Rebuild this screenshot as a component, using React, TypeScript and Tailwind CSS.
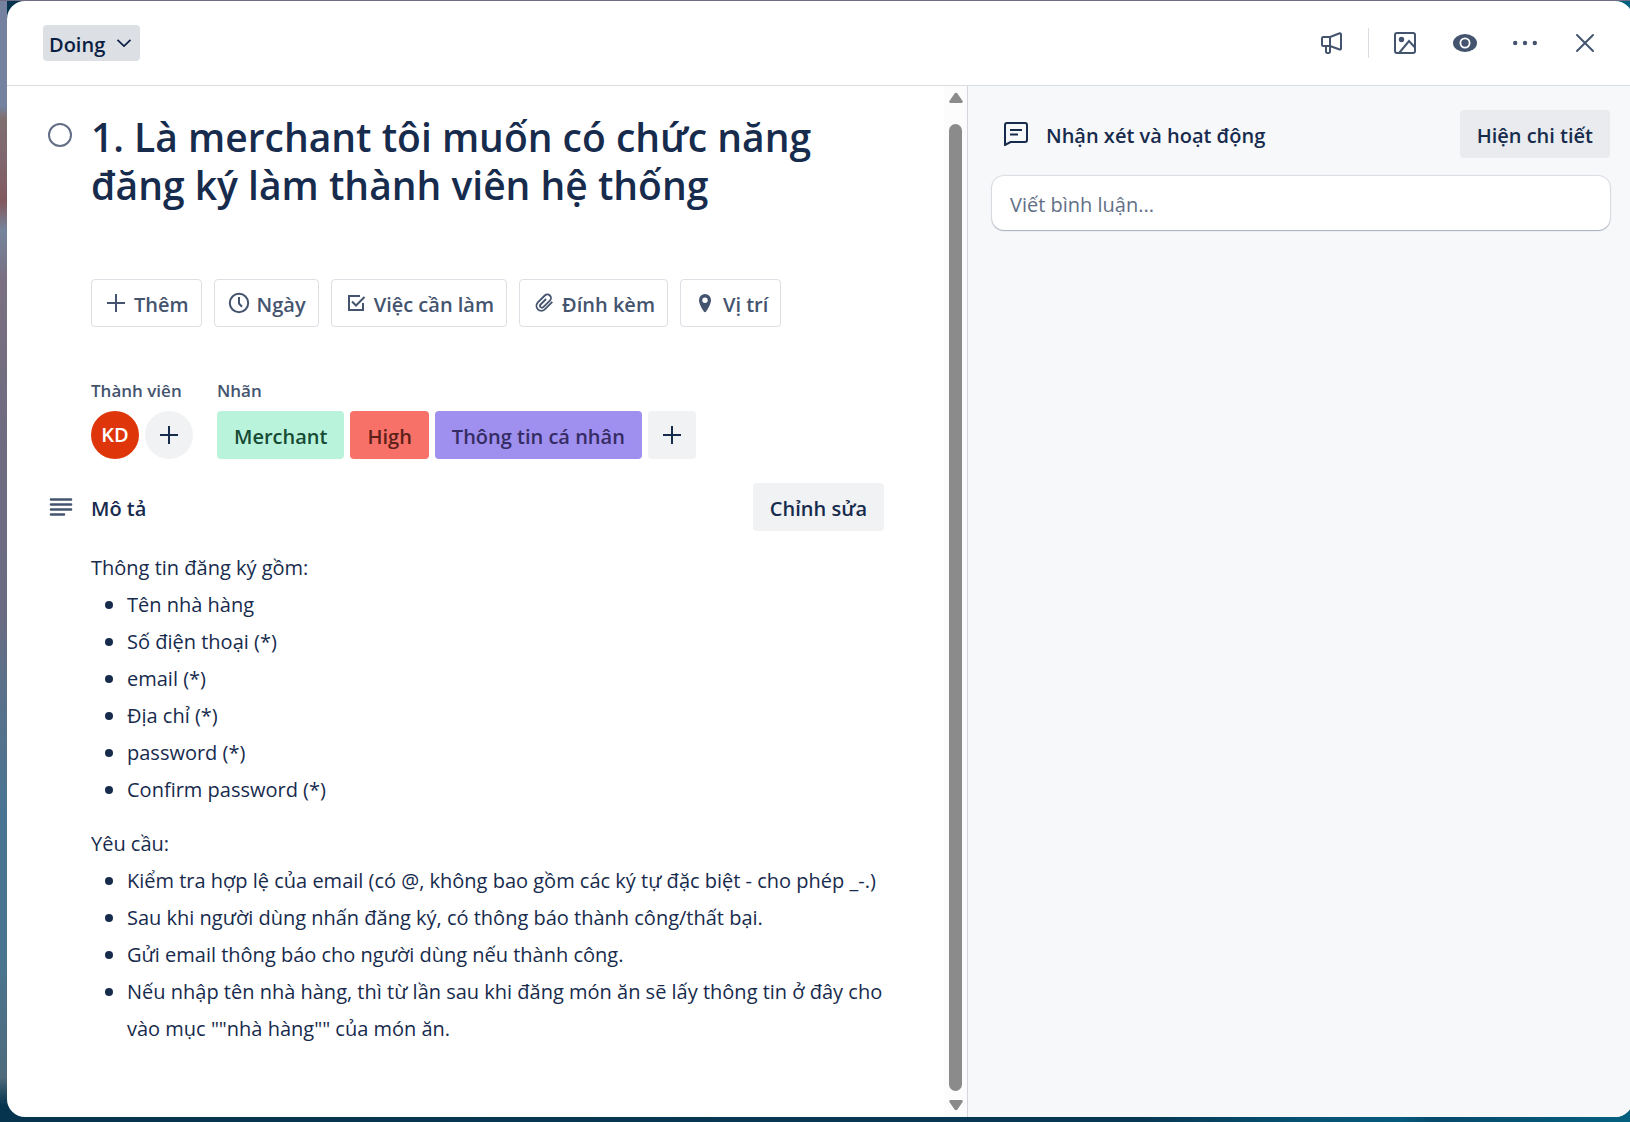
import type { ReactNode } from "react";

function Icon({ children }: { children: ReactNode }) {
  return (
    <svg width="24" height="24" viewBox="0 0 24 24" fill="none" stroke="currentColor" strokeWidth={2} className="shrink-0" aria-hidden="true">
      {children}
    </svg>
  );
}

const PlusIcon = () => (
  <Icon>
    <path d="M12 3v18M3 12h18" />
  </Icon>
);

const MegaphoneIcon = () => (
  <Icon>
    <path d="M10 6H3.300A1.300 1.300 0 0 0 2 7.300v6.400A1.300 1.300 0 0 0 3.300 15H10z" />
    <path d="M10 6l9.700-3.700a1 1 0 0 1 1.300 1v14.200a1 1 0 0 1-1.300 1L10 15" />
    <path d="M6 15v5.600A1.300 1.300 0 0 0 7.300 22h1.400a1.300 1.300 0 0 0 1.300-1.400V15" />
  </Icon>
);

const ImageIcon = () => (
  <Icon>
    <rect x="2" y="2" width="20" height="20" rx="2" />
    <circle cx="8.5" cy="8.5" r="2.7" fill="currentColor" stroke="none" />
    <path d="M6.5 21.5L16 10l5.500 6" />
  </Icon>
);

const EyeIcon = () => (
  <Icon>
    <ellipse cx="12" cy="12" rx="12" ry="9" fill="currentColor" stroke="none" />
    <circle cx="12" cy="12" r="4.6" stroke="#fff" strokeWidth="1.8" />
  </Icon>
);

const MoreIcon = () => (
  <Icon>
    <g fill="currentColor" stroke="none">
      <circle cx="2.2" cy="12" r="2.2" />
      <circle cx="12" cy="12" r="2.2" />
      <circle cx="21.8" cy="12" r="2.2" />
    </g>
  </Icon>
);

const CloseIcon = () => (
  <Icon>
    <path d="M4 4l16 16M20 4L4 20" strokeLinecap="round" />
  </Icon>
);

const ClockIcon = () => (
  <Icon>
    <circle cx="12" cy="12" r="9.2" />
    <path d="M12 6v6.500l3 3.200" />
  </Icon>
);

const ChecklistIcon = () => (
  <Icon>
    <path d="M16 5H5v14h14v-7" />
    <path d="M8 10.500l4 4L20.500 6" />
  </Icon>
);

const ClipIcon = () => (
  <Icon>
    <path
      d="M20.300 10.800l-7.800 7.800a4.900 4.900 0 0 1-6.900-6.900l7.200-7.200a3.600 3.600 0 0 1 5.100 5.100l-6.600 6.600a1.900 1.900 0 0 1-2.700-2.700l5.500-5.500"
      strokeWidth="1.8"
    />
  </Icon>
);

const PinIcon = () => (
  <Icon>
    <path
      fill="currentColor"
      stroke="none"
      fillRule="evenodd"
      d="M12 3a6 6 0 0 0-6 6c0 3.200 2.500 8.300 4.700 11.300a1.600 1.600 0 0 0 2.600 0C15.500 17.300 18 12.200 18 9a6 6 0 0 0-6-6zm0 3.500a2.700 2.700 0 1 1 0 5.400 2.700 2.700 0 0 1 0-5.400z"
    />
  </Icon>
);

const CommentIcon = () => (
  <Icon>
    <path d="M1 23V3a2 2 0 0 1 2-2h18a2 2 0 0 1 2 2v15a2 2 0 0 1-2 2H6.500z" />
    <path d="M6 8h12M6 12.500h8" />
  </Icon>
);

const DescriptionIcon = () => (
  <Icon>
    <path d="M2 4.500h20M2 9.500h20M2 14.500h20M2 19.500h13" strokeWidth="2.6" strokeLinecap="round" />
  </Icon>
);

const headerActions = [
  { label: "Ảnh bìa", icon: <ImageIcon /> },
  { label: "Theo dõi", icon: <EyeIcon /> },
  { label: "Thao tác", icon: <MoreIcon /> },
  { label: "Đóng", icon: <CloseIcon /> },
];

const cardActions = [
  { label: "Thêm", icon: <PlusIcon /> },
  { label: "Ngày", icon: <ClockIcon /> },
  { label: "Việc cần làm", icon: <ChecklistIcon /> },
  { label: "Đính kèm", icon: <ClipIcon /> },
  { label: "Vị trí", icon: <PinIcon /> },
];

const tags = [
  { label: "Merchant", tone: "bg-[#baf3db] text-[#164b35]" },
  { label: "High", tone: "bg-[#f87168] text-[#5d1f1a]" },
  { label: "Thông tin cá nhân", tone: "bg-[#9f8fef] text-[#352c63]" },
];

const fields = ["Tên nhà hàng", "Số điện thoại (*)", "email (*)", "Địa chỉ (*)", "password (*)", "Confirm password (*)"];

const requirements = [
  "Kiểm tra hợp lệ của email (có @, không bao gồm các ký tự đặc biệt - cho phép _-.)",
  "Sau khi người dùng nhấn đăng ký, có thông báo thành công/thất bại.",
  "Gửi email thông báo cho người dùng nếu thành công.",
  'Nếu nhập tên nhà hàng, thì từ lần sau khi đăng món ăn sẽ lấy thông tin ở đây cho vào mục ""nhà hàng"" của món ăn.',
];

function HeaderButton({ label, children }: { label: string; children: ReactNode }) {
  return (
    <button type="button" aria-label={label} className="flex size-12 items-center justify-center">
      {children}
    </button>
  );
}

function BulletList({ items }: { items: string[] }) {
  return (
    <ul>
      {items.map((item) => (
        <li key={item} className="flex">
          <span className="flex h-[37px] w-9 shrink-0 items-center justify-center">
            <span className="size-2 rounded-full bg-[#172b4d]" />
          </span>
          <span>{item}</span>
        </li>
      ))}
    </ul>
  );
}

function ScrollArrow({ className = "" }: { className?: string }) {
  return (
    <svg width="16" height="12" viewBox="0 0 16 12" className={`shrink-0 fill-[#8b8b8b] ${className}`}>
      <path d="M6.600 1.400a1.700 1.700 0 0 1 2.800 0l5.200 7.600a1.300 1.300 0 0 1-1.100 2H2.500a1.300 1.300 0 0 1-1.100-2z" />
    </svg>
  );
}

function Scrollbar() {
  return (
    <div className="flex w-6 shrink-0 flex-col items-center border-r border-[#d4d6de] bg-[#fcfcfc] py-1.5" aria-hidden="true">
      <ScrollArrow />
      <div className="mt-5 mb-2 w-[13px] flex-1 rounded-full bg-[#8b8b8b]" />
      <ScrollArrow className="rotate-180" />
    </div>
  );
}

export default function App() {
  return (
    <div className="flex min-h-screen overflow-hidden bg-[linear-gradient(#6f6c84,#6f6c84),linear-gradient(to_bottom,#74829f_0,#74829f_9.5%,#7f6f70_10.5%,#80676f_14%,#82595e_18%,#75849c_20.5%,#7a7081_25%,#6e6b80_40%,#6a6b82_55%,#5d7089_60%,#4a7592_72%,#4a7590_85%,#4f6b7c_96%,#06344f_98.5%),linear-gradient(to_right,#06344f_0,#073853_70%,#065273_80%,#065a7c_86%,#064a6c_88%,#04607f_100%)] bg-[length:100%_1px,7px_100%,100%_100%] bg-no-repeat pt-px pb-[5px] pl-[7px] font-['Open_Sans','Noto_Sans',sans-serif] text-[20px] text-[#172b4d]">
      <main className="-mr-[3px] flex flex-1 flex-col overflow-hidden rounded-[18px] bg-white">
        <header className="flex h-[85px] items-center justify-between border-b border-[#d9dce1] pr-6 pl-9 text-[#44546f]">
          <div className="relative flex items-center rounded bg-[#dcdfe4] text-[#091e42]">
            <select aria-label="Danh sách" className="h-9 appearance-none pt-1 pr-[34px] pl-1.5 font-semibold">
              <option>Doing</option>
            </select>
            <svg width="16" height="16" viewBox="0 0 16 16" fill="none" stroke="currentColor" strokeWidth="1.7" className="pointer-events-none absolute right-2" aria-hidden="true">
              <path d="M1.500 4.800L8 11l6.500-6.200" />
            </svg>
          </div>
          <div className="flex items-center gap-3">
            <HeaderButton label="Phản hồi">
              <MegaphoneIcon />
            </HeaderButton>
            <span className="h-[30px] w-px bg-[#d9dce1]" />
            {headerActions.map((a) => (
              <HeaderButton key={a.label} label={a.label}>
                {a.icon}
              </HeaderButton>
            ))}
          </div>
        </header>

        <div className="flex flex-1">
          <div className="flex w-[961px] shrink-0">
            <section className="flex-1 pt-6 pr-[60px] pl-9">
              <div className="flex">
                <div className="w-12 shrink-0 pt-[13px] pl-[5px]">
                  <input type="checkbox" aria-label="Hoàn thành" className="block size-6 appearance-none rounded-full border-2 border-[#626f86]" />
                </div>
                <h1 className="pt-[3px] text-[39px] leading-[48px] font-semibold">1. Là merchant tôi muốn có chức năng đăng ký làm thành viên hệ thống</h1>
              </div>

              <div className="pl-12">
                <div className="mt-[70px] flex gap-3">
                  {cardActions.map((a) => (
                    <button key={a.label} type="button" className="flex h-12 items-center gap-1.5 rounded border border-[#dcdfe4] px-3 whitespace-nowrap text-[#44546f]">
                      {a.icon}
                      <span className="pt-1 font-semibold">{a.label}</span>
                    </button>
                  ))}
                </div>

                <div className="mt-[52px] flex gap-6">
                  <div>
                    <h2 className="text-[17px] leading-6 font-semibold text-[#44546f]">Thành viên</h2>
                    <div className="mt-2 flex gap-1.5">
                      <span className="flex size-12 items-center justify-center rounded-full bg-[#de350b] font-semibold text-white">KD</span>
                      <button type="button" aria-label="Thêm thành viên" className="flex size-12 items-center justify-center rounded-full bg-[#f1f2f4]">
                        <PlusIcon />
                      </button>
                    </div>
                  </div>
                  <div>
                    <h2 className="text-[17px] leading-6 font-semibold text-[#44546f]">Nhãn</h2>
                    <div className="mt-2 flex gap-1.5">
                      {tags.map((t) => (
                        <button key={t.label} type="button" className={`h-12 rounded px-[17px] pt-1 font-semibold whitespace-nowrap ${t.tone}`}>
                          {t.label}
                        </button>
                      ))}
                      <button type="button" aria-label="Thêm nhãn" className="flex size-12 items-center justify-center rounded bg-[#f1f2f4]">
                        <PlusIcon />
                      </button>
                    </div>
                  </div>
                </div>
              </div>

              <div className="mt-6 flex h-12 items-center">
                <span className="w-12 pl-1.5 text-[#44546f]">
                  <DescriptionIcon />
                </span>
                <h2 className="flex-1 pt-1 font-semibold">Mô tả</h2>
                <button type="button" className="h-12 rounded bg-[#f1f2f4] px-[17px] pt-1 font-semibold">
                  Chỉnh sửa
                </button>
              </div>

              <div className="mt-[18px] pl-12 leading-[37px]">
                <p>Thông tin đăng ký gồm:</p>
                <BulletList items={fields} />
                <p className="mt-[17px]">Yêu cầu:</p>
                <BulletList items={requirements} />
              </div>
            </section>
            <Scrollbar />
          </div>

          <aside className="flex-1 bg-[#f7f8fa] pt-6 pr-[23px] pl-6">
            <div className="flex h-12 items-center pl-3">
              <CommentIcon />
              <h2 className="flex-1 pt-1 pl-[18px] font-semibold">Nhận xét và hoạt động</h2>
              <button type="button" className="h-12 rounded bg-[#e9ebee] px-[17px] pt-1 font-semibold">
                Hiện chi tiết
              </button>
            </div>
            <input
              type="text"
              aria-label="Viết bình luận"
              placeholder="Viết bình luận..."
              className="mt-[18px] h-[54px] w-full rounded-xl bg-white px-[18px] pt-0.5 font-medium shadow-[0_1px_1px_#091e4240,0_0_1px_1px_#091e421f] placeholder:text-[#626f86]"
            />
          </aside>
        </div>
      </main>
    </div>
  );
}
